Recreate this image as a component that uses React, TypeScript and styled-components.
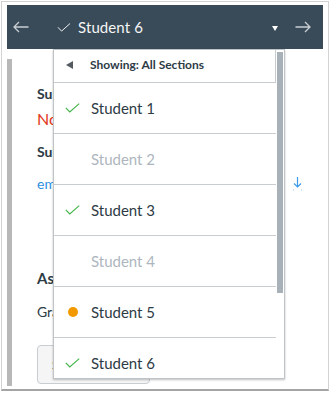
import React from "react";
import styled, { createGlobalStyle } from "styled-components";

const GlobalStyle = createGlobalStyle`
  html, body {
    margin: 0;
    padding: 0;
    background: #ffffff;
  }
  body {
    font-family: Lato, "Noto Sans", "Liberation Sans", sans-serif;
    color: #2d3b45;
  }
  * {
    box-sizing: border-box;
  }
`;

const Frame = styled.div`
  position: relative;
  margin: 1px 0 0 1px;
  width: 328px;
  height: 390px;
  border: 1px solid #d2d2d2;
  border-bottom: 2px solid #a4a4a4;
  padding: 3px 5px 0 5px;
  display: flex;
  flex-direction: column;
  background: #ffffff;
`;

const Header = styled.header`
  height: 44px;
  flex-shrink: 0;
  background: #394b58;
  display: flex;
  align-items: center;
  color: #f5f5f5;
`;

const NavArrow = styled.button<{ $side: "left" | "right" }>`
  border: 0;
  padding: 0;
  background: none;
  display: flex;
  width: 16px;
  height: 12px;
  margin-left: ${(p) => (p.$side === "left" ? "6px" : "17px")};
  margin-right: ${(p) => (p.$side === "right" ? "12px" : "0")};
`;

const StudentSelect = styled.div`
  flex: 1;
  margin-left: 28px;
  display: flex;
  align-items: center;
  gap: 7px;
  font-size: 15px;
  letter-spacing: 0.1px;
`;

const Caret = styled.span`
  margin-left: auto;
  width: 0;
  height: 0;
  border-left: 3px solid transparent;
  border-right: 3px solid transparent;
  border-top: 5px solid #ffffff;
  margin-top: 2px;
`;

const Body = styled.div`
  flex: 1;
  display: flex;
  padding: 10px 0 3px;
`;

const LeftBar = styled.div`
  width: 5px;
  background: #b8b8b8;
`;

const Content = styled.div`
  flex: 1;
  margin-left: 25px;
  padding: 26px 21px 0 0;
  display: flex;
  flex-direction: column;
`;

const Label = styled.div<{ $gap?: number; $size?: number }>`
  font-weight: 700;
  font-size: ${(p) => p.$size ?? 14}px;
  line-height: 18px;
  margin-top: ${(p) => p.$gap ?? 0}px;
`;

const Status = styled.div`
  color: #e0381c;
  font-size: 16px;
  line-height: 20px;
  margin-top: 6px;
`;

const FileRow = styled.div`
  margin-top: 14px;
  display: flex;
  align-items: center;
  justify-content: space-between;
  line-height: 18px;
`;

const FileLink = styled.a`
  color: #2b8fe0;
  font-size: 14px;
  text-decoration: none;
`;

const Text = styled.div`
  font-size: 14px;
  line-height: 18px;
  margin-top: 16px;
`;

const Button = styled.button`
  margin-top: 24px;
  width: 113px;
  height: 39px;
  border: 1px solid #c7cdd1;
  border-radius: 4px;
  background: #f5f5f5;
  color: #2d3b45;
  font-family: inherit;
  font-size: 14px;
  text-align: left;
  padding-left: 14px;
`;

const Dropdown = styled.div`
  position: absolute;
  left: 51px;
  top: 47px;
  width: 232px;
  height: 330px;
  background: #ffffff;
  border: 1px solid #bfc4c8;
  box-shadow: 0 1px 2px rgba(0, 0, 0, 0.25);
  display: flex;
  overflow: hidden;
`;

const List = styled.div`
  flex: 1;
  display: flex;
  flex-direction: column;
`;

const SectionHeader = styled.div`
  height: 33px;
  flex-shrink: 0;
  border-right: 1px solid #c7cdd1;
  border-bottom: 1px solid #c7cdd1;
  display: flex;
  align-items: center;
  padding: 0 0 3px 12px;
  gap: 17px;
  font-size: 12px;
  font-weight: 700;
  color: #2d3b45;
`;

const BackTriangle = styled.span`
  width: 0;
  height: 0;
  border-top: 4px solid transparent;
  border-bottom: 4px solid transparent;
  border-right: 7px solid #555b60;
`;

const Item = styled.div<{ $muted?: boolean }>`
  height: 51px;
  flex-shrink: 0;
  border-bottom: 1px solid #c7cdd1;
  display: flex;
  align-items: center;
  padding-left: 11px;
  gap: 11px;
  font-size: 15px;
  color: ${(p) => (p.$muted ? "#adb6be" : "#2d3b45")};
`;

const IconSlot = styled.span`
  width: 15px;
  height: 12px;
  display: flex;
  align-items: center;
  justify-content: center;
`;

const Dot = styled.span`
  width: 10px;
  height: 10px;
  border-radius: 50%;
  background: #f29900;
`;

const ScrollTrack = styled.div`
  width: 8px;
  padding: 2px 1px 0;
`;

const Thumb = styled.div`
  height: 241px;
  background: #a9b1b8;
`;

const Check = ({ color, w = 15, h = 10 }: { color: string; w?: number; h?: number }) => (
  <svg width={w} height={h} viewBox="0 0 15 10" fill="none">
    <path d="M0.8 4.8 L4.8 9 L14.2 0.6" stroke={color} strokeWidth="1.1" />
  </svg>
);

const ArrowIcon = ({ dir }: { dir: "left" | "right" }) => (
  <svg width="16" height="12" viewBox="0 0 16 12" fill="none">
    {dir === "left" ? (
      <path d="M15.5 6 H1 M6 1 L1 6 L6 11" stroke="#c9ced3" strokeWidth="1.3" />
    ) : (
      <path d="M0.5 6 H15 M10 1 L15 6 L10 11" stroke="#c9ced3" strokeWidth="1.3" />
    )}
  </svg>
);

const DownloadIcon = () => (
  <svg width="9" height="14" viewBox="0 0 9 14" fill="none">
    <path d="M4.5 0 V10 M1 6.5 L4.5 10 L8 6.5" stroke="#3d9be9" strokeWidth="1.2" />
    <path d="M0 13 H1 M8 13 H9" stroke="#9ccaf2" strokeWidth="1" />
  </svg>
);

type Student = {
  name: string;
  state: "done" | "none" | "pending";
};

const students: Student[] = [
  { name: "Student 1", state: "done" },
  { name: "Student 2", state: "none" },
  { name: "Student 3", state: "done" },
  { name: "Student 4", state: "none" },
  { name: "Student 5", state: "pending" },
  { name: "Student 6", state: "done" },
];

const App = () => {
  return (
    <>
      <GlobalStyle />
      <Frame>
        <Header>
          <NavArrow $side="left">
            <ArrowIcon dir="left" />
          </NavArrow>
          <StudentSelect>
            <Check color="#f0f2f4" w={14} h={9} />
            Student 6
            <Caret />
          </StudentSelect>
          <NavArrow $side="right">
            <ArrowIcon dir="right" />
          </NavArrow>
        </Header>

        <Body>
          <LeftBar />
          <Content>
            <Label>Submission</Label>
            <Status>Not Submitted</Status>
            <Label $gap={14}>Submitted Files</Label>
            <FileRow>
              <FileLink href="#">email.txt</FileLink>
              <DownloadIcon />
            </FileRow>
            <Label $gap={76} $size={15}>Assessment</Label>
            <Text>Grade out of 10</Text>
            <Button>Submit</Button>
          </Content>
        </Body>

        <Dropdown>
          <List>
            <SectionHeader>
              <BackTriangle />
              Showing: All Sections
            </SectionHeader>
            {students.map((s) => (
              <Item key={s.name} $muted={s.state === "none"}>
                <IconSlot>
                  {s.state === "done" && <Check color="#41b447" />}
                  {s.state === "pending" && <Dot />}
                </IconSlot>
                {s.name}
              </Item>
            ))}
          </List>
          <ScrollTrack>
            <Thumb />
          </ScrollTrack>
        </Dropdown>
      </Frame>
    </>
  );
};

export default App;
